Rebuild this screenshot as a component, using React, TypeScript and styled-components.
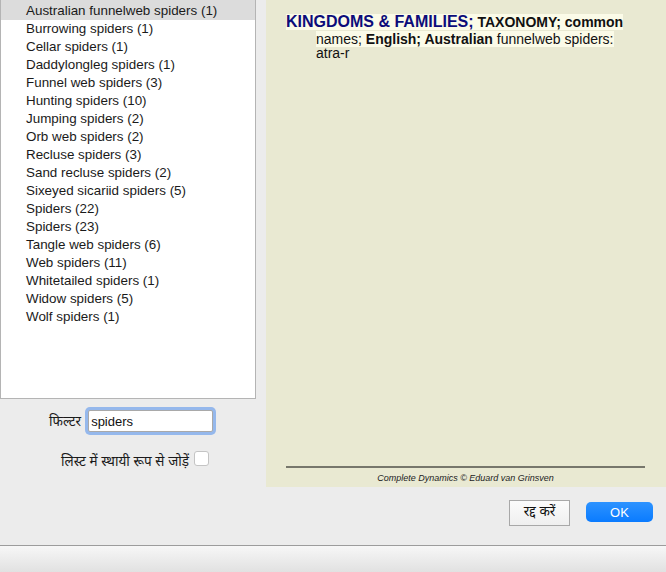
import React from "react";
import styled, { createGlobalStyle } from "styled-components";

const Global = createGlobalStyle`
  html, body { margin: 0; padding: 0; }
  body { background: #ececec; font-family: "Liberation Sans", Arial, "Noto Sans", sans-serif; }
  #root { width: 666px; height: 572px; overflow: hidden; }
`;

const Window = styled.div`
  width: 666px;
  height: 572px;
  display: flex;
  flex-direction: column;
  background: #ececec;
`;

const Main = styled.div`
  flex: 1;
  display: grid;
  grid-template-columns: 256px 400px;
  column-gap: 10px;
`;

const LeftCol = styled.div`
  display: flex;
  flex-direction: column;
`;

const List = styled.ul`
  list-style: none;
  margin: 0;
  padding: 2px 0 0;
  height: 399px;
  box-sizing: border-box;
  background: #fff;
  border: 1px solid #b4b4b4;
  border-top: none;
  overflow: hidden;
`;

const Item = styled.li<{ $selected?: boolean }>`
  height: 18px;
  line-height: 18px;
  padding-left: 25px;
  font-size: 13.4px;
  color: #1a1a1a;
  background: ${(p) => (p.$selected ? "#dcdcdc" : "transparent")};
  &:first-child {
    margin-top: -2px;
    padding-top: 2px;
  }
`;

const FilterRow = styled.div`
  display: flex;
  align-items: center;
  gap: 6px;
  margin-top: 11px;
  padding-left: 49px;
`;

const Label = styled.span`
  font-size: 13.5px;
  color: #1a1a1a;
  font-family: "Liberation Sans", "Noto Sans", "Noto Sans Devanagari", sans-serif;
`;

const Input = styled.input`
  width: 125px;
  height: 22px;
  box-sizing: border-box;
  border: 1px solid #a9a9a9;
  border-radius: 2px;
  box-shadow: 0 0 0 3px #95b8ec;
  font-size: 13px;
  padding: 2px 2px;
  margin-left: 1px;
  font-family: "Liberation Sans", Arial, sans-serif;
  color: #111;
  outline: none;
  background: #fff;
`;

const CheckRow = styled.label`
  display: flex;
  align-items: center;
  gap: 5px;
  margin-top: 20px;
  padding-left: 61px;
`;

const Check = styled.span`
  width: 13px;
  height: 13px;
  border: 1px solid #c4c4c4;
  border-radius: 3px;
  background: #fff;
  margin-top: -6px;
`;

const RightCol = styled.div`
  display: flex;
  flex-direction: column;
`;

const Panel = styled.div`
  height: 487px;
  background: #e9e9d2;
  display: flex;
  flex-direction: column;
  padding: 12px 21px 4px 20px;
  box-sizing: border-box;
`;

const Entry = styled.p`
  margin: 0;
  padding-left: 30px;
  text-indent: -30px;
  font-size: 14px;
  line-height: 14px;
  color: #111;
  flex: 1;
`;

const Hl = styled.span`
  background: #fbfbe8;
`;

const Rubric = styled.span`
  font-size: 16px;
  line-height: 20px;
  font-weight: bold;
  color: #0c0c7a;
`;

const Chapter = styled.span`
  font-size: 14px;
  font-weight: bold;
  color: #111;
`;

const Rule = styled.hr`
  margin: 0;
  border: none;
  height: 2px;
  background: #77776c;
`;

const Credit = styled.div`
  font-size: 9px;
  font-style: italic;
  text-align: center;
  color: #222;
  margin-top: 5px;
`;

const ButtonRow = styled.div`
  display: flex;
  justify-content: flex-end;
  align-items: center;
  gap: 16px;
  margin-top: 13px;
  padding-right: 13px;
`;

const CancelButton = styled.button`
  width: 61px;
  height: 26px;
  box-sizing: border-box;
  border: 1px solid #a8a8a8;
  background: linear-gradient(#fbfbfb, #efefef);
  font-size: 13.5px;
  color: #111;
  font-family: "Liberation Sans", "Noto Sans Devanagari", sans-serif;
  padding: 0;
`;

const OkButton = styled.button`
  width: 67px;
  height: 20px;
  box-sizing: border-box;
  border: none;
  border-radius: 5px;
  background: linear-gradient(#2d93ff, #0a7bff);
  color: #fff;
  font-size: 13px;
  font-family: "Liberation Sans", Arial, sans-serif;
  padding: 0;
  margin-top: -2px;
`;

const StatusBar = styled.div`
  height: 26px;
  border-top: 1px solid #9c9c9c;
  background: linear-gradient(#f7f7f7, #e1e1e1);
`;

const items = [
  "Australian funnelweb spiders (1)",
  "Burrowing spiders (1)",
  "Cellar spiders (1)",
  "Daddylongleg spiders (1)",
  "Funnel web spiders (3)",
  "Hunting spiders (10)",
  "Jumping spiders (2)",
  "Orb web spiders (2)",
  "Recluse spiders (3)",
  "Sand recluse spiders (2)",
  "Sixeyed sicariid spiders (5)",
  "Spiders (22)",
  "Spiders (23)",
  "Tangle web spiders (6)",
  "Web spiders (11)",
  "Whitetailed spiders (1)",
  "Widow spiders (5)",
  "Wolf spiders (1)",
];

export default function App() {
  return (
    <Window>
      <Global />
      <Main>
        <LeftCol>
          <List>
            {items.map((t, i) => (
              <Item key={i} $selected={i === 0}>
                {t}
              </Item>
            ))}
          </List>
          <FilterRow>
            <Label>फिल्टर</Label>
            <Input defaultValue="spiders" />
          </FilterRow>
          <CheckRow>
            <Label>लिस्ट में स्थायी रूप से जोड़ें</Label>
            <Check />
          </CheckRow>
        </LeftCol>
        <RightCol>
          <Panel>
            <Entry>
              <Hl>
                <Rubric>KINGDOMS &amp; FAMILIES;</Rubric>{" "}
                <Chapter>TAXONOMY; common</Chapter> names; <b>English; Australian</b> funnelweb spiders:
              </Hl>{" "}
              atra-r
            </Entry>
            <Rule />
            <Credit>Complete Dynamics © Eduard van Grinsven</Credit>
          </Panel>
          <ButtonRow>
            <CancelButton>रद्द करें</CancelButton>
            <OkButton>OK</OkButton>
          </ButtonRow>
        </RightCol>
      </Main>
      <StatusBar />
    </Window>
  );
}
